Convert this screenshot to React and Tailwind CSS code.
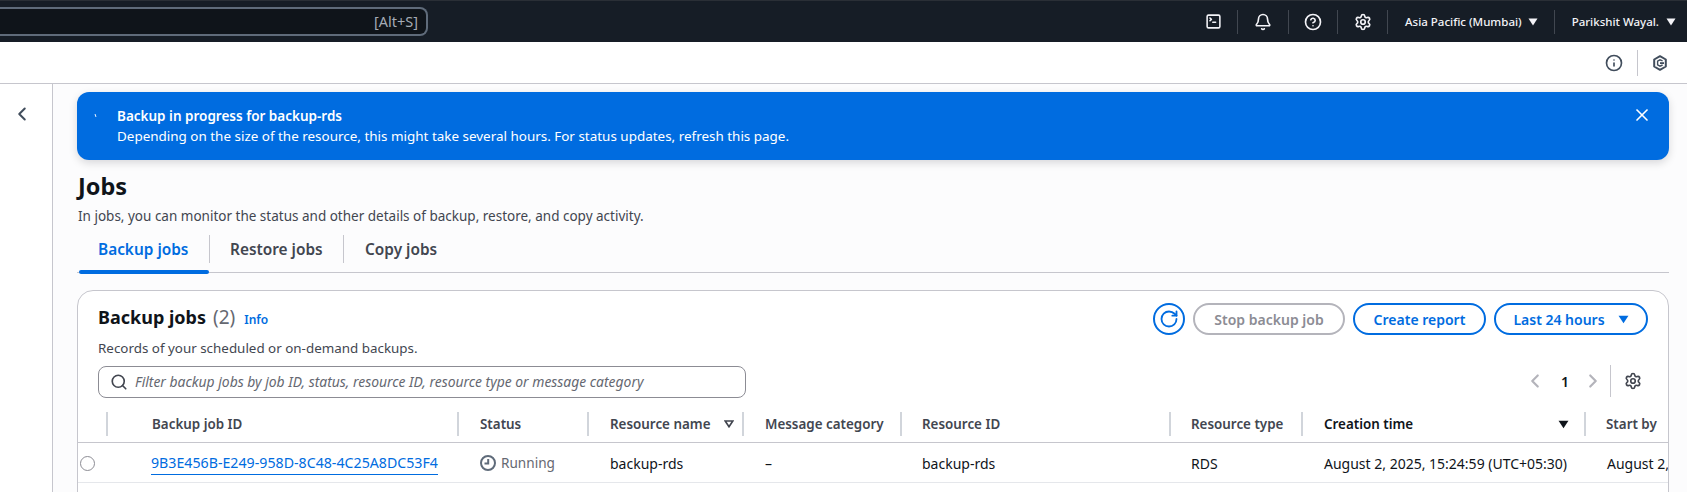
import { Bell, ChevronLeft, ChevronRight, CircleHelp, Info, RotateCw, Search, Settings, SquareTerminal, X } from 'lucide-react';

const font = { fontFamily: '"Noto Sans", sans-serif' };

function TopDivider() {
    return <div className="h-[24px] w-px bg-[#414750]" />;
}

function Caret({ className }) {
    return (
        <svg viewBox="0 0 10 8" className={className} fill="currentColor">
            <path d="M0.5 0.5h9L5 7.5z" />
        </svg>
    );
}

function HexIcon() {
    return (
        <svg viewBox="0 0 16 16" className="h-[16px] w-[16px]" fill="none" stroke="#414d5c" strokeWidth="2">
            <path d="M8 1.2 13.8 4.5v7L8 14.8 2.2 11.5v-7z" strokeLinejoin="round" />
            <path d="M10.6 5.8 8 4.8 5.6 6.2v3.6L8 11.2l2.6-1.2" strokeWidth="1.4" />
            <path d="M8 7.2h4v1.8H8z" fill="#414d5c" stroke="none" />
        </svg>
    );
}

function ClockIcon() {
    return (
        <svg viewBox="0 0 16 16" className="h-[16px] w-[16px]" fill="none" stroke="#5f6b7a" strokeWidth="2">
            <circle cx="8" cy="8" r="7" />
            <path d="M8.2 4v4.5H4.5" />
        </svg>
    );
}

function HeaderCell({ width, bold, children, last, pad = 'pl-[20px]' }) {
    return (
        <div className={`flex h-[24px] shrink-0 items-center ${pad} ${width} ${last ? '' : 'border-r-2 border-[#d1d5db]'} ${bold ? 'text-[#0f141a]' : 'text-[#424650]'}`}>
            {children}
        </div>
    );
}

function BodyCell({ width, children }) {
    return <div className={`flex shrink-0 items-center pl-[21px] ${width}`}>{children}</div>;
}

export default function App() {
    return (
        <div className="flex h-[492px] w-[1687px] flex-col overflow-hidden bg-white text-[14px] text-[#0f141a]" style={font}>
            {/* top nav */}
            <div className="flex h-[42px] shrink-0 items-center border-t border-[#2a2f36] bg-[#161d26] text-[11.5px] font-medium text-[#f3f3f7]">
                <div className="flex h-[29px] w-[428px] shrink-0 items-center justify-end rounded-r-[8px] border-2 border-l-0 border-[#5f6b7a] bg-[#0f141a] pr-[8px] text-[14.5px] font-normal text-[#a4abb5]">
                    [Alt+S]
                </div>
                <div className="ml-auto flex items-center">
                    <SquareTerminal size={17} strokeWidth={2.2} className="mr-[15px]" />
                    <TopDivider />
                    <Bell size={18} strokeWidth={2.2} className="mx-[16px]" />
                    <TopDivider />
                    <CircleHelp size={18} strokeWidth={2.2} className="mx-[15px]" />
                    <TopDivider />
                    <Settings size={18} strokeWidth={2.2} className="ml-[16px] mr-[15px]" />
                    <TopDivider />
                    <span className="ml-[17px] whitespace-nowrap">Asia Pacific (Mumbai)</span>
                    <Caret className="ml-[6px] mr-[16px] h-[8px] w-[10px]" />
                    <TopDivider />
                    <span className="ml-[17px] whitespace-nowrap">Parikshit Wayal.</span>
                    <Caret className="ml-[7px] mr-[11px] h-[8px] w-[10px]" />
                </div>
            </div>

            {/* tools bar */}
            <div className="flex h-[42px] shrink-0 items-center justify-end border-b border-[#c6c6cd] bg-white pr-[19px] text-[#414d5c]">
                <Info size={18} strokeWidth={2.2} />
                <div className="mx-[14px] h-[26px] w-px bg-[#c6c6cd]" />
                <HexIcon />
            </div>

            <div className="flex min-h-0 flex-1">
                <div className="flex w-[53px] shrink-0 justify-center border-r border-[#c6c6cd] pt-[19px] pr-[9px] text-[#414d5c]">
                    <ChevronLeft size={22} strokeWidth={2.2} />
                </div>

                <div className="min-w-0 flex-1 bg-[#fcfcfd] pl-[24px] pr-[18px] pt-[8px]">
                    {/* flash */}
                    <div className="relative h-[68px] rounded-[12px] bg-[#006ce0] pl-[40px] pr-[41px] pt-[14px] text-[13.45px] leading-[20px] text-white shadow-[0_3px_8px_rgba(0,7,22,0.15)]">
                        <span className="absolute left-[18px] top-[22px] h-[3px] w-px rotate-[-20deg] bg-white" />
                        <div className="text-[13.5px] font-semibold">Backup in progress for backup-rds</div>
                        <div>Depending on the size of the resource, this might take several hours. For status updates, refresh this page.</div>
                        <X size={20} strokeWidth={2} className="absolute right-[17px] top-[13px]" />
                    </div>

                    {/* page header */}
                    <h1 className="ml-[1px] mt-[11px] text-[23.5px] font-bold leading-[30px]">Jobs</h1>
                    <p className="ml-[1px] mt-[6px] text-[13.5px] leading-[18px] text-[#424650]">
                        In jobs, you can monitor the status and other details of backup, restore, and copy activity.
                    </p>

                    {/* tabs */}
                    <div className="mt-[8px] flex h-[40px] items-start border-b border-[#c6c6cd] text-[15.4px] font-semibold text-[#424650]">
                        <div className="relative ml-[2px] flex h-[40px] w-[130px] items-start pl-[19px] pt-[5px] text-[#006ce0]">
                            <span>Backup jobs</span>
                            <span className="absolute bottom-[-1px] left-0 h-[4px] w-[130px] rounded-full bg-[#006ce0]" />
                        </div>
                        <div className="mt-[2px] h-[28px] w-px bg-[#c6c6cd]" />
                        <div className="w-[133px] pl-[20px] pt-[5px]">Restore jobs</div>
                        <div className="mt-[2px] h-[28px] w-px bg-[#c6c6cd]" />
                        <div className="pl-[21px] pt-[5px]">Copy jobs</div>
                    </div>

                    {/* table card */}
                    <div className="mt-[17px] overflow-hidden rounded-[16px] border border-[#c6c6cd] bg-white">
                        <div className="px-[20px] pt-[12px]">
                            <div className="flex items-start justify-between">
                                <div>
                                    <div className="flex items-baseline">
                                        <h2 className="text-[18px] font-bold leading-[28px]">Backup jobs</h2>
                                        <span className="ml-[7px] text-[19px] leading-[28px] text-[#656871]">(2)</span>
                                        <span className="ml-[9px] text-[12px] font-semibold text-[#006ce0]">Info</span>
                                    </div>
                                    <p className="mt-[8px] text-[13.4px] leading-[18px] text-[#424650]">Records of your scheduled or on-demand backups.</p>
                                </div>
                                <div className="flex items-center gap-[8px] pr-[0px] text-[14px] font-semibold text-[#006ce0]">
                                    <div className="flex h-[32px] w-[32px] items-center justify-center rounded-full border-2 border-[#006ce0]">
                                        <RotateCw size={20} strokeWidth={2.2} />
                                    </div>
                                    <div className="flex h-[32px] w-[152px] items-center justify-center rounded-full border-2 border-[#b4b4bb] text-[#8c8c94]">Stop backup job</div>
                                    <div className="flex h-[32px] w-[133px] items-center justify-center rounded-full border-2 border-[#006ce0]">Create report</div>
                                    <div className="flex h-[32px] w-[154px] items-center justify-center gap-[13px] rounded-full border-2 border-[#006ce0]">
                                        Last 24 hours
                                        <Caret className="h-[9px] w-[11px]" />
                                    </div>
                                </div>
                            </div>

                            <div className="mt-[9px] flex items-center justify-between">
                                <div className="flex h-[32px] w-[648px] items-center rounded-[8px] border border-[#8c8c94] bg-white pl-[11px] text-[#656871]">
                                    <Search size={18} strokeWidth={2.2} className="text-[#424650]" />
                                    <span className="ml-[7px] text-[13.9px] italic">Filter backup jobs by job ID, status, resource ID, resource type or message category</span>
                                </div>
                                <div className="mt-[-2px] flex items-center pr-[6px]">
                                    <ChevronLeft size={22} strokeWidth={2.4} className="text-[#b4b4bb]" />
                                    <span className="ml-[15px] mr-[13px] text-[14px] font-semibold">1</span>
                                    <ChevronRight size={22} strokeWidth={2.4} className="text-[#b4b4bb]" />
                                    <div className="ml-[6px] h-[32px] w-px bg-[#c6c6cd]" />
                                    <Settings size={18} strokeWidth={2.2} className="ml-[13px] text-[#424650]" />
                                </div>
                            </div>
                        </div>

                        {/* table */}
                        <div className="mt-[14px] flex h-[31px] items-start border-b border-[#c6c6cd] text-[13.4px] font-semibold">
                            <div className="h-[24px] w-[30px] shrink-0 border-r-2 border-[#d1d5db]" />
                            <HeaderCell width="w-[351px]"><span className="pl-[24px]">Backup job ID</span></HeaderCell>
                            <HeaderCell width="w-[130px]" pad="pl-[21px]">Status</HeaderCell>
                            <HeaderCell width="w-[155px]" pad="pl-[21px]">
                                <span>Resource name</span>
                                <svg viewBox="0 0 10 8" className="ml-[13px] h-[8px] w-[10px]" fill="none" stroke="#424650" strokeWidth="1.6">
                                    <path d="M1.2 1h7.6L5 6.8z" />
                                </svg>
                            </HeaderCell>
                            <HeaderCell width="w-[158px]" pad="pl-[21px]">Message category</HeaderCell>
                            <HeaderCell width="w-[269px]">Resource ID</HeaderCell>
                            <HeaderCell width="w-[132px]">Resource type</HeaderCell>
                            <HeaderCell width="w-[283px]" bold pad="pl-[21px]">
                                <span>Creation time</span>
                                <Caret className="ml-auto mr-[15px] h-[9px] w-[11px]" />
                            </HeaderCell>
                            <HeaderCell width="w-[100px]" last>Start by</HeaderCell>
                        </div>
                        <div className="flex h-[40px] items-stretch whitespace-nowrap border-b border-[#e5e7eb] pt-[2px] text-[14px]">
                            <div className="flex w-[30px] shrink-0 items-center pl-[2px]">
                                <span className="h-[15px] w-[15px] rounded-full border border-[#8c8c94] bg-white" />
                            </div>
                            <BodyCell width="w-[351px]">
                                <a className="ml-[22px] border-b border-[#006ce0] text-[14.2px] text-[#006ce0]">9B3E456B-E249-958D-8C48-4C25A8DC53F4</a>
                            </BodyCell>
                            <BodyCell width="w-[130px]">
                                <span className="flex items-center gap-[5px] text-[13.6px] text-[#656871]"><ClockIcon />Running</span>
                            </BodyCell>
                            <BodyCell width="w-[155px]">backup-rds</BodyCell>
                            <BodyCell width="w-[158px]">–</BodyCell>
                            <BodyCell width="w-[269px]"><span className="ml-[-1px]">backup-rds</span></BodyCell>
                            <BodyCell width="w-[132px]"><span className="ml-[-1px]">RDS</span></BodyCell>
                            <BodyCell width="w-[283px]">August 2, 2025, 15:24:59 (UTC+05:30)</BodyCell>
                            <BodyCell width="w-[100px]">August 2, 2025</BodyCell>
                        </div>
                        <div className="h-[40px]" />
                    </div>
                </div>
            </div>
        </div>
    );
}
